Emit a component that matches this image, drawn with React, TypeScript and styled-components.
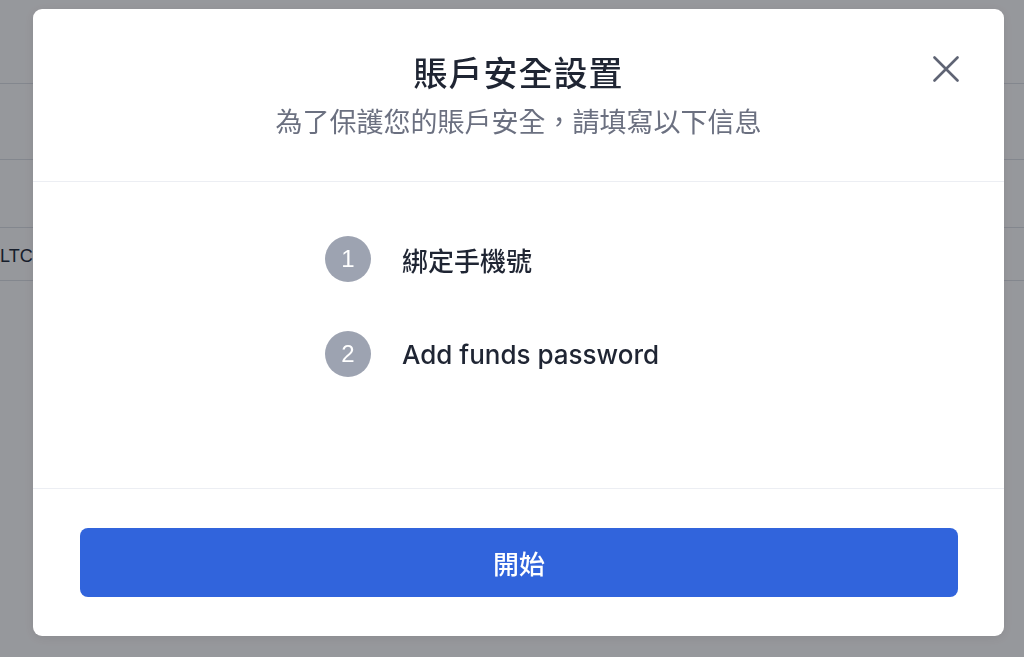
import React from "react";
import styled, { createGlobalStyle } from "styled-components";

const GlobalStyle = createGlobalStyle`
  html, body {
    margin: 0;
    padding: 0;
    background: #fff;
    font-family: "Noto Sans CJK TC", "Noto Sans", "Liberation Sans", sans-serif;
  }
  * { box-sizing: border-box; }
`

const steps = ["綁定手機號", "Add funds password"]

export default function App() {
  return <>
    <GlobalStyle />
    <Page>
      <Row $h={84} />
      <Row $h={76} />
      <Row $h={68} />
      <Row $h={53}><Cell>LTC</Cell></Row>
    </Page>
    <Overlay>
      <Modal>
        <Header>
          <Title>賬戶安全設置</Title>
          <Subtitle>為了保護您的賬戶安全，請填寫以下信息</Subtitle>
          <CloseButton aria-label="close">
            <svg width="26" height="26" viewBox="0 0 26 26" fill="none">
              <path d="M1.5 1.5 L24.5 24.5 M24.5 1.5 L1.5 24.5" stroke="#5f6474" strokeWidth="2.6" strokeLinecap="round" />
            </svg>
          </CloseButton>
        </Header>
        <Body>
          {steps.map((s, i) => <Step key={i}>
            <StepNum>{i + 1}</StepNum>
            <StepText>{s}</StepText>
          </Step>)}
        </Body>
        <Footer>
          <StartButton>開始</StartButton>
        </Footer>
      </Modal>
    </Overlay>
  </>
}

const Page = styled.div`
  width: 100%;
  height: 657px;
  overflow: hidden;
  background: #fff;
`
const Row = styled.div<{ $h: number }>`
  height: ${p => p.$h}px;
  border-bottom: 1px solid #dfe2e8;
  display: flex;
  align-items: center;
`
const Cell = styled.div`
  width: 32px;
  padding-top: 4px;
  text-align: right;
  white-space: nowrap;
  font-family: "Liberation Sans", sans-serif;
  font-size: 18px;
  color: #283040;
`
const Overlay = styled.div`
  position: fixed;
  top: 0;
  left: 0;
  right: 0;
  bottom: 0;
  background: rgba(1, 4, 14, 0.41);
  padding: 9px 0 0 33px;
`
const Modal = styled.div`
  width: 971px;
  height: 627px;
  background: #fff;
  border-radius: 9px;
  display: flex;
  flex-direction: column;
  overflow: hidden;
  box-shadow: 0 2px 10px rgba(0,0,0,0.08);
`
const Header = styled.div`
  position: relative;
  height: 173px;
  padding-top: 41px;
  border-bottom: 1px solid #eceef3;
  display: flex;
  flex-direction: column;
  align-items: center;
`
const Title = styled.div`
  font-size: 34px;
  line-height: 44px;
  font-weight: 500;
  letter-spacing: 1px;
  color: #1f2533;
`
const Subtitle = styled.div`
  margin-top: 9px;
  font-size: 27px;
  line-height: 36px;
  color: #6b7080;
`
const CloseButton = styled.button`
  position: absolute;
  top: 47px;
  right: 45px;
  width: 26px;
  height: 26px;
  padding: 0;
  border: none;
  background: none;
  display: flex;
`
const Body = styled.div`
  height: 307px;
  border-bottom: 1px solid #eceef3;
  padding: 54px 0 0 292px;
  display: flex;
  flex-direction: column;
  gap: 49px;
`
const Step = styled.div`
  display: flex;
  align-items: center;
  gap: 31px;
`
const StepNum = styled.div`
  width: 46px;
  height: 46px;
  border-radius: 50%;
  background: #9da3b1;
  color: #fff;
  display: flex;
  align-items: center;
  justify-content: center;
  font-family: "Liberation Sans", sans-serif;
  font-size: 24px;
`
const StepText = styled.div`
  font-family: Inter, "Noto Sans CJK TC", sans-serif;
  font-size: 26px;
  font-weight: 500;
  color: #1f2533;
`
const Footer = styled.div`
  flex: 1;
  padding: 39px 46px 0 47px;
`
const StartButton = styled.button`
  width: 100%;
  height: 69px;
  border: none;
  border-radius: 8px;
  background: #3164dc;
  color: #fff;
  font-family: "Noto Sans CJK TC", sans-serif;
  font-size: 26px;
  font-weight: 500;
`
